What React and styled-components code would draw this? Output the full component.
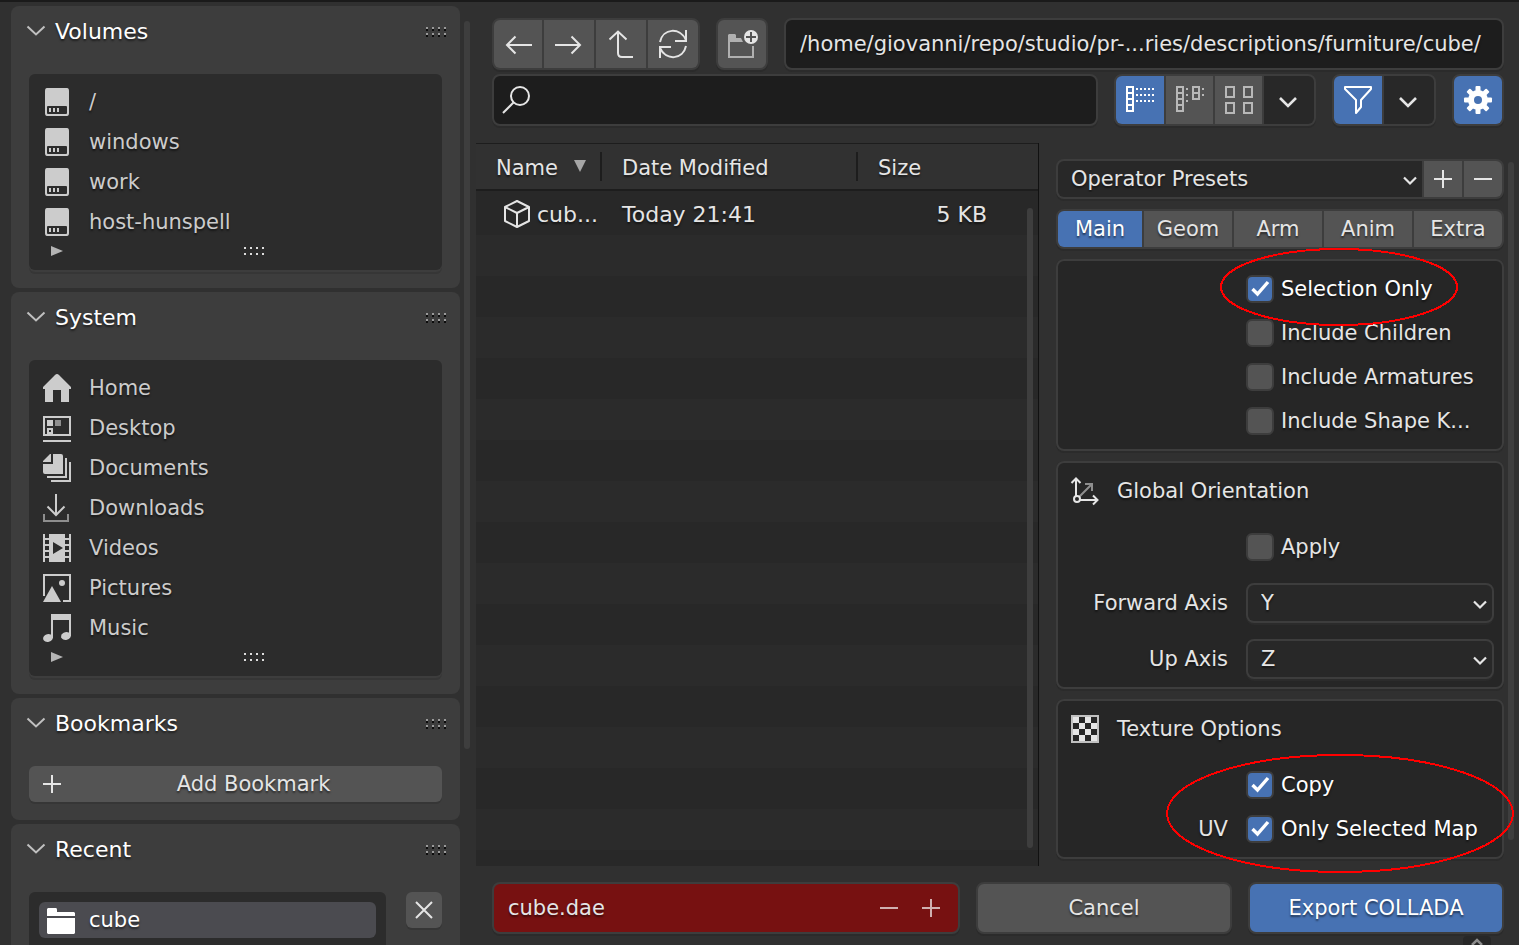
import React from "react";
import styled, { createGlobalStyle, css } from "styled-components";

const c = {
  page: "#303030",
  panel: "#3d3d3d",
  list: "#2c2c2c",
  edge: "#3d3d3d",
  button: "#545454",
  field: "#1d1d1d",
  menu: "#282828",
  box: "#262626",
  blue: "#4772b3",
  red: "#771111",
  text: "#e5e5e5",
  soft: "#cccccc",
};

const GlobalStyle = createGlobalStyle`
  *, *::before, *::after { box-sizing: border-box; }
  body {
    margin: 0;
    background: ${c.page};
    color: ${c.text};
    font: 21px/26px "DejaVu Sans", sans-serif;
    text-shadow: 0 2px 2px rgba(0, 0, 0, 0.5);
  }
  button, input, select {
    font: inherit;
    color: inherit;
    text-shadow: inherit;
    margin: 0;
    padding: 0;
    border: 0;
    background: none;
    border-radius: 0;
    outline: none;
  }
  svg { display: block; flex: none; overflow: visible; }
`;

const Page = styled.div`
  display: flex;
  height: 100vh;
  overflow: hidden;
  border-top: 2px solid #1a1a1a;
`;

/* Sidebar */
const Sidebar = styled.aside`
  flex: 0 0 476px;
  display: flex;
  gap: 4px;
  padding: 4px 6px 0 11px;
`;
const PanelStack = styled.div`
  flex: 1;
  display: flex;
  flex-direction: column;
  gap: 4px;
`;
const ScrollThumb = styled.div`
  flex: none;
  width: 6px;
  border-radius: 3px;
  background: #3e3e3e;
`;
const SidebarThumb = styled(ScrollThumb)`
  height: 728px;
  margin-top: 15px;
`;
const PanelBox = styled.section`
  flex: none;
  padding: 0 18px 18px;
  border-radius: 8px;
  background: ${c.panel};
`;
const PanelHeader = styled.header`
  display: flex;
  align-items: center;
  height: 52px;
  margin: 0 -6px 16px -2px;
`;
const PanelToggle = styled.button`
  flex: 1;
  display: flex;
  align-items: center;
  gap: 10px;
  color: #fff;
  font-size: 22px;
  text-align: left;
`;
const List = styled.div`
  flex: 1;
  padding-top: 8px;
  border-radius: 6px;
  background: ${c.list};
  box-shadow: 0 2px 0 #3d3d3d, 0 4px 0 #363636;
`;
const PlaceLink = styled.a`
  display: flex;
  align-items: center;
  gap: 18px;
  height: 40px;
  padding: 0 14px;
  color: ${c.soft};
  text-decoration: none;
`;
const ListFooter = styled.div`
  display: grid;
  grid-template-columns: 1fr auto 1fr;
  align-items: center;
  height: 28px;
  padding: 0 0 8px 22px;
  margin-right: -16px;
`;
const AddButton = styled.button`
  display: flex;
  align-items: center;
  width: 100%;
  height: 36px;
  padding-left: 14px;
  border-radius: 6px;
  background: ${c.button};
  box-shadow: 0 2px 0 #363636;
`;
const AddLabel = styled.span`
  flex: 1;
  padding-left: 4px;
  text-align: center;
`;
const RecentRow = styled.div`
  display: flex;
  align-items: flex-start;
  gap: 20px;
`;
const RecentList = styled(List)`
  padding: 10px;
  height: 160px;
`;
const RecentLink = styled(PlaceLink)`
  gap: 14px;
  height: 36px;
  padding: 0 8px;
  border-radius: 6px;
  background: #4b4b50;
  color: #fff;
`;
const CloseButton = styled.button`
  display: grid;
  place-items: center;
  width: 36px;
  height: 36px;
  border-radius: 6px;
  background: ${c.button};
  box-shadow: 0 2px 0 #363636;
`;

/* Main area */
const Main = styled.main`
  position: relative;
  flex: 1;
  min-width: 0;
  display: flex;
  flex-direction: column;
`;
const Toolbar = styled.div`
  display: flex;
  flex-direction: column;
  gap: 4px;
  padding: 16px 15px 17px 16px;
`;
const ToolRow = styled.div`
  display: flex;
  gap: 16px;
`;
const framed = css`
  border: 2px solid ${c.edge};
  border-radius: 8px;
  overflow: hidden;
  box-shadow: 0 2px 0 #2b2b2b;
`;
const Group = styled.div`
  ${framed}
  display: flex;
  gap: 2px;
  height: ${(p) => (p.$compact ? 40 : 52)}px;
  background: ${c.edge};
`;
const tones = {
  plain: c.button,
  on: c.blue,
  menu: c.menu,
};
const Segment = styled.button`
  display: grid;
  place-items: center;
  flex: ${(p) => (p.$width ? `0 0 ${p.$width}px` : "1")};
  background: ${(p) => tones[p.$tone || "plain"]};
  color: ${(p) => (p.$tone === "on" ? "#fff" : c.text)};
`;
const FieldFrame = styled.label`
  ${framed}
  flex: 1;
  min-width: 0;
  display: flex;
  align-items: center;
  height: 52px;
  padding-left: ${(p) => (p.$icon ? 8 : 14)}px;
  padding-right: 6px;
  background: ${(p) => (p.$alert ? c.red : c.field)};
`;
const TextInput = styled.input`
  flex: 1;
  min-width: 0;
  height: 46px;
`;
const StepButton = styled.button`
  display: grid;
  place-items: center;
  width: 42px;
  height: 48px;
  color: #d0b0b0;
`;
const Content = styled.div`
  flex: 1;
  min-height: 0;
  display: flex;
`;
const FileArea = styled.div`
  position: relative;
  flex: 1;
  min-width: 0;
  border-right: 1px solid #111;
  background: repeating-linear-gradient(#282828 0 41px, #2b2b2b 41px 82px) 0 51px;
`;
const FileThumb = styled(ScrollThumb)`
  position: absolute;
  top: 65px;
  right: 5px;
  bottom: 18px;
`;
const FileTable = styled.table`
  width: 100%;
  table-layout: fixed;
  border-collapse: separate;
  border-spacing: 0;
`;
const HeadCell = styled.th`
  width: ${(p) => (p.$width ? `${p.$width}px` : "auto")};
  height: 48px;
  padding: 0;
  border-top: 1px solid #1d1d1d;
  border-bottom: 2px solid #1d1d1d;
  background: #313131;
  font-weight: normal;
  text-align: left;
`;
const HeadLabel = styled.div`
  display: flex;
  align-items: center;
  justify-content: space-between;
  height: 29px;
  padding: 3px 14px 0 20px;
  border-right: ${(p) => (p.$last ? "0" : "2px solid #1d1d1d")};
`;
const FileCell = styled.td`
  height: 44px;
  padding: 3px ${(p) => (p.$right ? 51 : 0)}px 0 ${(p) => p.$left || 0}px;
  background: #282828;
  font-size: 22px;
  text-align: ${(p) => (p.$right ? "right" : "left")};
`;
const FileName = styled.div`
  display: flex;
  align-items: center;
  gap: 6px;
`;

/* Export options */
const Options = styled.aside`
  flex: 0 0 480px;
  display: flex;
  gap: 4px;
  padding: 16px 5px 0 17px;
`;
const OptionStack = styled.div`
  flex: 1;
  display: flex;
  flex-direction: column;
  gap: 10px;
`;
const OptionsThumb = styled(ScrollThumb)`
  margin: 3px 0 26px;
`;
const SelectWrap = styled.div`
  flex: 1;
  display: grid;
  align-items: center;
  background: ${c.menu};
  & > * { grid-area: 1 / 1; }
  & > svg { justify-self: end; margin-right: 5px; pointer-events: none; }
`;
const Select = styled.select`
  appearance: none;
  width: 100%;
  height: 36px;
  padding: 0 30px 0 13px;
`;
const OptionBox = styled.fieldset`
  position: relative;
  min-width: 0;
  margin: 0;
  padding: 0;
  border: 2px solid ${c.edge};
  border-radius: 8px;
  background: ${c.box};
  box-shadow: 0 2px 0 #2b2b2b;
`;
const BoxTitle = styled.div`
  display: flex;
  align-items: center;
  gap: 18px;
  height: 56px;
  padding: 0 13px;
`;
const CheckGroup = styled.div`
  padding: 6px 0;
`;
const OptionRow = styled.div`
  display: grid;
  grid-template-columns: 170px minmax(0, 1fr);
  column-gap: 18px;
  align-items: center;
  height: ${(p) => (p.$tall ? 56 : 44)}px;
  padding-right: 8px;
`;
const RowLabel = styled.label`
  grid-column: 1;
  text-align: right;
`;
const CheckLabel = styled.label`
  grid-column: 2;
  display: flex;
  align-items: center;
  gap: 7px;
  white-space: nowrap;
  color: ${(p) => (p.$on ? "#fff" : c.text)};
`;
const CheckFrame = styled.span`
  flex: none;
  display: grid;
  place-items: center;
  & > * { grid-area: 1 / 1; }
  & > svg { pointer-events: none; }
`;
const CheckInput = styled.input`
  appearance: none;
  width: 28px;
  height: 28px;
  border: 2px solid ${c.edge};
  border-radius: 6px;
  background: ${c.button};
  &:checked { background: ${c.blue}; }
`;
const Mark = styled.svg`
  position: absolute;
  top: ${(p) => p.$top}px;
  right: ${(p) => p.$right}px;
  z-index: 2;
  pointer-events: none;
`;
const Footer = styled.footer`
  display: flex;
  gap: 16px;
  padding: 16px 15px 11px 16px;
`;
const ActionButton = styled.button`
  ${framed}
  flex: 0 0 256px;
  height: 52px;
  background: ${(p) => (p.$primary ? c.blue : c.button)};
  color: ${(p) => (p.$primary ? "#fff" : c.text)};
`;
const CornerTab = styled.button`
  position: absolute;
  right: 28px;
  bottom: 0;
  width: 28px;
  height: 9px;
  border-radius: 4px 4px 0 0;
  background: #272727;
  overflow: hidden;
`;

/* Icons */
const Icon = ({ size = 28, children, ...rest }) => (
  <svg width={size} height={size} viewBox={`0 0 ${size} ${size}`} fill="none" aria-hidden="true" {...rest}>
    {children}
  </svg>
);
const Line = ({ d, w = 2, color = "currentColor", ...rest }) => (
  <path d={d} stroke={color} strokeWidth={w} {...rest} />
);
const Fill = ({ d, color = "currentColor", ...rest }) => <path d={d} fill={color} {...rest} />;

const DriveIcon = () => (
  <Icon>
    <Fill
      fillRule="evenodd"
      d="M4 0H24Q26 0 26 3V25Q26 28 24 28H4Q2 28 2 25V3Q2 0 4 0ZM5 18Q4 18 4 19V25Q4 26 5 26H23Q24 26 24 25V19Q24 18 23 18ZM6 20H8V24H6ZM10 20H12V24H10ZM14 20H16V24H14Z"
    />
  </Icon>
);
const HomeIcon = () => (
  <Icon><Fill d="M14 0Q15 0 16 1L28 13V15H26V28H18V16H10V28H2V15H0V13L12 1Q13 0 14 0Z" /></Icon>
);
const DesktopIcon = () => (
  <Icon>
    <Line d="M1 3H27V21H1ZM0 27H28M5 15H9V19H5Z" />
    <Fill d="M4 6H10V12H4Z" />
    <Fill d="M12 6H18V12H12Z" color="#8e8e8e" />
  </Icon>
);
const DocumentsIcon = () => (
  <Icon>
    <Fill d="M8 0V8H0V7L7 0ZM10 0H18Q20 0 20 2V20H2Q0 20 0 18V10H10Z" />
    <Line d="M23 4V23H4M27 8V27H8" />
  </Icon>
);
const DownloadsIcon = () => (
  <Icon>
    <Line d="M13 0V21M4.500 12.500L13 21L21.500 12.500" />
    <Line d="M1 20V27H25V20" color="#8e8e8e" />
  </Icon>
);
const VideosIcon = () => (
  <Icon>
    <Fill d="M0 0H2V4H6V0H22V4H26V0H28V28H26V24H22V28H6V24H2V28H0ZM2 6V10H6V6ZM2 12V16H6V12ZM2 18V22H6V18ZM22 6V10H26V6ZM22 12V16H26V12ZM22 18V22H26V18ZM10 8V20L20 14Z" fillRule="evenodd" />
  </Icon>
);
const PicturesIcon = () => (
  <Icon>
    <Line d="M1 22V1H27V27H20" />
    <Fill d="M0 28L9 12L18 28Z" />
    <circle cx="19" cy="9" r="3" fill="currentColor" />
  </Icon>
);
const MusicIcon = () => (
  <Icon>
    <Fill d="M8 0H28V6H10V24H8ZM26 4H28V22H26Z" />
    <ellipse cx="5" cy="24" rx="5" ry="3.800" fill="currentColor" transform="rotate(-15 5 24)" />
    <ellipse cx="23" cy="22" rx="5" ry="3.800" fill="currentColor" transform="rotate(-15 23 22)" />
  </Icon>
);
const FolderIcon = () => (
  <Icon><Fill d="M1 2H9Q10 2 10 4V6H27L28 7V10H0V3ZM0 12H28V27L27 28H1L0 27Z" /></Icon>
);
const ChevronDown = () => (
  <svg width="18" height="12" viewBox="0 0 18 12" fill="none" aria-hidden="true">
    <Line d="M0.500 0.500L9 8.500L17.500 0.500" color="#c0c0c0" />
  </svg>
);
const MenuChevron = () => (
  <Icon><Line w={2.6} d="M5 12L13 20L21 12" /></Icon>
);
const SmallChevron = () => (
  <Icon size={14}><Line w={2.200} d="M1 5.500L7 11.500L13 5.500" /></Icon>
);
const PlusIcon = () => (
  <Icon size={18}><Line d="M9 0V18M0 9H18" /></Icon>
);
const MinusIcon = () => (
  <Icon size={18}><Line d="M0 9H18" /></Icon>
);
const CloseIcon = () => (
  <Icon size={18}><Line d="M1 1L17 17M17 1L1 17" /></Icon>
);
const grid = [0, 6, 12, 18];
const Grip = ({ raised }) => (
  <svg width="22" height="12" viewBox="0 0 22 12" aria-hidden="true">
    {grid.map((x) =>
      [0, 6].map((y) => (
        <g key={`${x}-${y}`}>
          <rect x={x} y={y + 1} width="2" height="2" fill={raised ? "#9a9a9a" : "#dedede"} />
          {raised && <rect x={x} y={y + 3} width="2" height="2" fill="#0c0c0c" />}
        </g>
      ))
    )}
  </svg>
);
const ExpandArrow = () => (
  <svg width="12" height="12" viewBox="0 0 12 12" aria-hidden="true">
    <Fill d="M0 0L12 5L0 10Z" color="#b4b4b4" />
  </svg>
);
const SortArrow = () => (
  <svg width="12" height="16" viewBox="0 0 12 16" aria-hidden="true">
    <Fill d="M0 0H12L6 12Z" color="#a6a6a6" />
  </svg>
);
const BackIcon = () => <Icon><Line d="M28 15H3M11.500 6.500L3 15L11.500 23.500" /></Icon>;
const ForwardIcon = () => <Icon><Line d="M0 15H25M16.500 6.500L25 15L16.500 23.500" /></Icon>;
const UpIcon = () => (
  <Icon><Line d="M11 1.500V23Q11 27 15 27H26M2.500 9.500L11 1.500L19.500 9.500" /></Icon>
);
const RefreshIcon = () => (
  <Icon>
    <Line d="M1 12C4 -2 21 -3 27 10M27 0V11H16M1 28V17H12M1 18C7 31 24 30 27 16" />
  </Icon>
);
const NewFolderIcon = () => (
  <Icon>
    <Fill d="M0 5L1 4H7L8 5V8H13L15 12H2V26H24V16H26V28H0Z" color="#b0b0b0" />
    <circle cx="23" cy="7" r="7" fill="currentColor" />
    <Line d="M23 2V12M18 7H28" color={c.button} />
  </Icon>
);
const SearchIcon = () => (
  <Icon>
    <circle cx="18" cy="10" r="9" stroke="currentColor" strokeWidth="2" />
    <Line d="M11.500 16.500L1 27" />
  </Icon>
);
const Dots = ({ xs, ys }) => xs.map((x) => ys.map((y) => (
  <rect key={`${x}-${y}`} x={x} y={y} width="2" height="2" fill="currentColor" />
)));
const VerticalListIcon = () => (
  <Icon>
    <Line d="M1 1H7V25H1ZM1 7H7M1 13H7M1 19H7" />
    <Dots xs={[10, 14, 18, 22, 26]} ys={[2, 8, 14]} />
  </Icon>
);
const HorizontalListIcon = () => (
  <Icon color="#b8b8b8">
    <Line d="M1 1H7V25H1ZM1 7H7M1 13H7M1 19H7M17 1H23V13H17ZM17 7H23" />
    <Dots xs={[10]} ys={[2, 8, 14]} />
    <Dots xs={[26]} ys={[2, 8]} />
  </Icon>
);
const ThumbnailIcon = () => (
  <Icon color="#b8b8b8"><Line d="M1 1H9V11H1ZM19 1H27V11H19ZM1 17H9V27H1ZM19 17H27V27H19Z" /></Icon>
);
const FilterIcon = () => (
  <Icon><Line d="M1 1H27V3L17 14V21L12 27V14L1 3Z" strokeLinejoin="round" /></Icon>
);
const GearIcon = () => (
  <Icon>
    {[0, 45, 90, 135].map((a) => (
      <rect key={a} x="11.500" y="0" width="5" height="28" rx="1" fill="currentColor" transform={`rotate(${a} 14 14)`} />
    ))}
    <circle cx="14" cy="14" r="10" fill="currentColor" />
    <circle cx="14" cy="14" r="4" fill={c.blue} />
  </Icon>
);
const CubeIcon = () => (
  <Icon><Line strokeLinejoin="round" d="M14 0L26 6V20L14 26L2 20V6ZM2 6L14 12L26 6M14 12V26" /></Icon>
);
const AxesIcon = () => (
  <Icon>
    <Line d="M8 20L20 8M14 7H21V14" color="#8e8e8e" />
    <circle cx="6" cy="22" r="3" stroke="currentColor" strokeWidth="2" />
    <Line d="M5 19V2M0.500 6L5 1.500L9.500 6M9 23H27M22 18.500L26.500 23L22 27.500" />
  </Icon>
);
const TextureIcon = () => (
  <Icon>
    <rect x="1" y="1" width="26" height="26" stroke="#c0c0c0" strokeWidth="2" />
    {[0, 1, 2, 3].map((r) => [0, 1, 2, 3].map((k) => (r + k) % 2 === 0 && (
      <rect key={`${r}-${k}`} x={2 + k * 6} y={2 + r * 6} width="6" height="6" fill="currentColor" />
    )))}
  </Icon>
);
const CheckIcon = () => (
  <Icon><Line w={3.4} color="#fff" d="M6.500 14L11.500 19L22 7" /></Icon>
);

/* Composed parts */
const Panel = ({ title, children }) => (
  <PanelBox>
    <PanelHeader>
      <PanelToggle type="button" aria-expanded="true"><ChevronDown />{title}</PanelToggle>
      <Grip raised />
    </PanelHeader>
    {children}
  </PanelBox>
);
const PlaceList = ({ items }) => (
  <List>
    {items.map(([label, Glyph]) => (
      <PlaceLink key={label} href="#"><Glyph />{label}</PlaceLink>
    ))}
    <ListFooter><ExpandArrow /><Grip /><span /></ListFooter>
  </List>
);
const CheckRow = ({ label, prefix, checked, tall }) => (
  <OptionRow $tall={tall}>
    {prefix && <RowLabel as="span">{prefix}</RowLabel>}
    <CheckLabel $on={checked}>
      <CheckFrame>
        <CheckInput type="checkbox" defaultChecked={checked} />
        {checked && <CheckIcon />}
      </CheckFrame>
      {label}
    </CheckLabel>
  </OptionRow>
);
const AxisRow = ({ id, label, value }) => (
  <OptionRow $tall>
    <RowLabel htmlFor={id}>{label}</RowLabel>
    <Group $compact>
      <SelectWrap>
        <Select id={id} defaultValue={value}>
          <option>X</option>
          <option>Y</option>
          <option>Z</option>
        </Select>
        <SmallChevron />
      </SelectWrap>
    </Group>
  </OptionRow>
);
const Ring = ({ top, right, width, height }) => (
  <Mark $top={top} $right={right} width={width} height={height} aria-hidden="true">
    <ellipse
      cx={width / 2}
      cy={height / 2}
      rx={width / 2 - 1}
      ry={height / 2 - 1}
      fill="none"
      stroke="#f00"
      strokeWidth="2"
      shapeRendering="crispEdges"
    />
  </Mark>
);

const volumes = [["/", DriveIcon], ["windows", DriveIcon], ["work", DriveIcon], ["host-hunspell", DriveIcon]];
const system = [
  ["Home", HomeIcon],
  ["Desktop", DesktopIcon],
  ["Documents", DocumentsIcon],
  ["Downloads", DownloadsIcon],
  ["Videos", VideosIcon],
  ["Pictures", PicturesIcon],
  ["Music", MusicIcon],
];

export default function App() {
  return (
    <>
      <GlobalStyle />
      <Page>
        <Sidebar>
          <PanelStack>
            <Panel title="Volumes"><PlaceList items={volumes} /></Panel>
            <Panel title="System"><PlaceList items={system} /></Panel>
            <Panel title="Bookmarks">
              <AddButton type="button"><PlusIcon /><AddLabel>Add Bookmark</AddLabel></AddButton>
            </Panel>
            <Panel title="Recent">
              <RecentRow>
                <RecentList><RecentLink href="#"><FolderIcon />cube</RecentLink></RecentList>
                <CloseButton type="button" aria-label="Clear recent"><CloseIcon /></CloseButton>
              </RecentRow>
            </Panel>
          </PanelStack>
          <SidebarThumb />
        </Sidebar>

        <Main>
          <Toolbar>
            <ToolRow>
              <Group>
                <Segment type="button" $width={48} aria-label="Back"><BackIcon /></Segment>
                <Segment type="button" $width={50} aria-label="Forward"><ForwardIcon /></Segment>
                <Segment type="button" $width={50} aria-label="Parent directory"><UpIcon /></Segment>
                <Segment type="button" $width={50} aria-label="Refresh"><RefreshIcon /></Segment>
              </Group>
              <Group><Segment type="button" $width={48} aria-label="New folder"><NewFolderIcon /></Segment></Group>
              <FieldFrame>
                <TextInput aria-label="Path" defaultValue="/home/giovanni/repo/studio/pr-...ries/descriptions/furniture/cube/" />
              </FieldFrame>
            </ToolRow>
            <ToolRow>
              <FieldFrame $icon>
                <SearchIcon />
                <TextInput type="text" aria-label="Search" />
              </FieldFrame>
              <Group>
                <Segment type="button" $width={48} $tone="on" aria-label="Vertical list"><VerticalListIcon /></Segment>
                <Segment type="button" $width={47} aria-label="Horizontal list"><HorizontalListIcon /></Segment>
                <Segment type="button" $width={47} aria-label="Thumbnails"><ThumbnailIcon /></Segment>
                <Segment type="button" $width={50} $tone="menu" aria-label="Display settings"><MenuChevron /></Segment>
              </Group>
              <Group>
                <Segment type="button" $width={48} $tone="on" aria-label="Filter"><FilterIcon /></Segment>
                <Segment type="button" $width={50} $tone="menu" aria-label="Filter settings"><MenuChevron /></Segment>
              </Group>
              <Group><Segment type="button" $width={48} $tone="on" aria-label="Options"><GearIcon /></Segment></Group>
            </ToolRow>
          </Toolbar>

          <Content>
            <FileArea>
              <FileTable>
                <thead>
                  <tr>
                    <HeadCell $width={126}><HeadLabel>Name<SortArrow /></HeadLabel></HeadCell>
                    <HeadCell $width={256}><HeadLabel>Date Modified</HeadLabel></HeadCell>
                    <HeadCell><HeadLabel $last>Size</HeadLabel></HeadCell>
                  </tr>
                </thead>
                <tbody>
                  <tr>
                    <FileCell $left={27}><FileName><CubeIcon />cub...</FileName></FileCell>
                    <FileCell $left={20}>Today 21:41</FileCell>
                    <FileCell $right>5 KB</FileCell>
                  </tr>
                </tbody>
              </FileTable>
              <FileThumb />
            </FileArea>

            <Options>
              <OptionStack>
                <Group $compact>
                  <SelectWrap>
                    <Select aria-label="Operator Presets">
                      <option>Operator Presets</option>
                    </Select>
                    <SmallChevron />
                  </SelectWrap>
                  <Segment type="button" $width={38} aria-label="Add preset"><PlusIcon /></Segment>
                  <Segment type="button" $width={38} aria-label="Remove preset"><MinusIcon /></Segment>
                </Group>
                <Group $compact role="tablist">
                  <Segment type="button" role="tab" aria-selected="true" $width={84} $tone="on">Main</Segment>
                  {["Geom", "Arm", "Anim", "Extra"].map((tab) => (
                    <Segment key={tab} type="button" role="tab" $width={88}>{tab}</Segment>
                  ))}
                </Group>
                <OptionBox>
                  <CheckGroup>
                    <CheckRow label="Selection Only" checked />
                    <CheckRow label="Include Children" />
                    <CheckRow label="Include Armatures" />
                    <CheckRow label="Include Shape K..." />
                  </CheckGroup>
                  <Ring top={-13} right={44} width={238} height={78} />
                </OptionBox>
                <OptionBox>
                  <BoxTitle><AxesIcon />Global Orientation</BoxTitle>
                  <CheckRow label="Apply" tall />
                  <AxisRow id="forward-axis" label="Forward Axis" value="Y" />
                  <AxisRow id="up-axis" label="Up Axis" value="Z" />
                </OptionBox>
                <OptionBox>
                  <BoxTitle><TextureIcon />Texture Options</BoxTitle>
                  <CheckGroup>
                    <CheckRow label="Copy" checked />
                    <CheckRow prefix="UV" label="Only Selected Map" checked />
                  </CheckGroup>
                  <Ring top={53} right={-12} width={348} height={119} />
                </OptionBox>
              </OptionStack>
              <OptionsThumb />
            </Options>
          </Content>

          <Footer>
            <FieldFrame as="div" $alert>
              <TextInput aria-label="File name" defaultValue="cube.dae" />
              <StepButton type="button" aria-label="Decrease number"><MinusIcon /></StepButton>
              <StepButton type="button" aria-label="Increase number"><PlusIcon /></StepButton>
            </FieldFrame>
            <ActionButton type="button">Cancel</ActionButton>
            <ActionButton type="button" $primary>Export COLLADA</ActionButton>
          </Footer>
          <CornerTab type="button" aria-label="Show region">
            <Icon><Line d="M9 9L14 4L19 9" color="#8a8a8a" w={2.5} /></Icon>
          </CornerTab>
        </Main>
      </Page>
    </>
  );
}
